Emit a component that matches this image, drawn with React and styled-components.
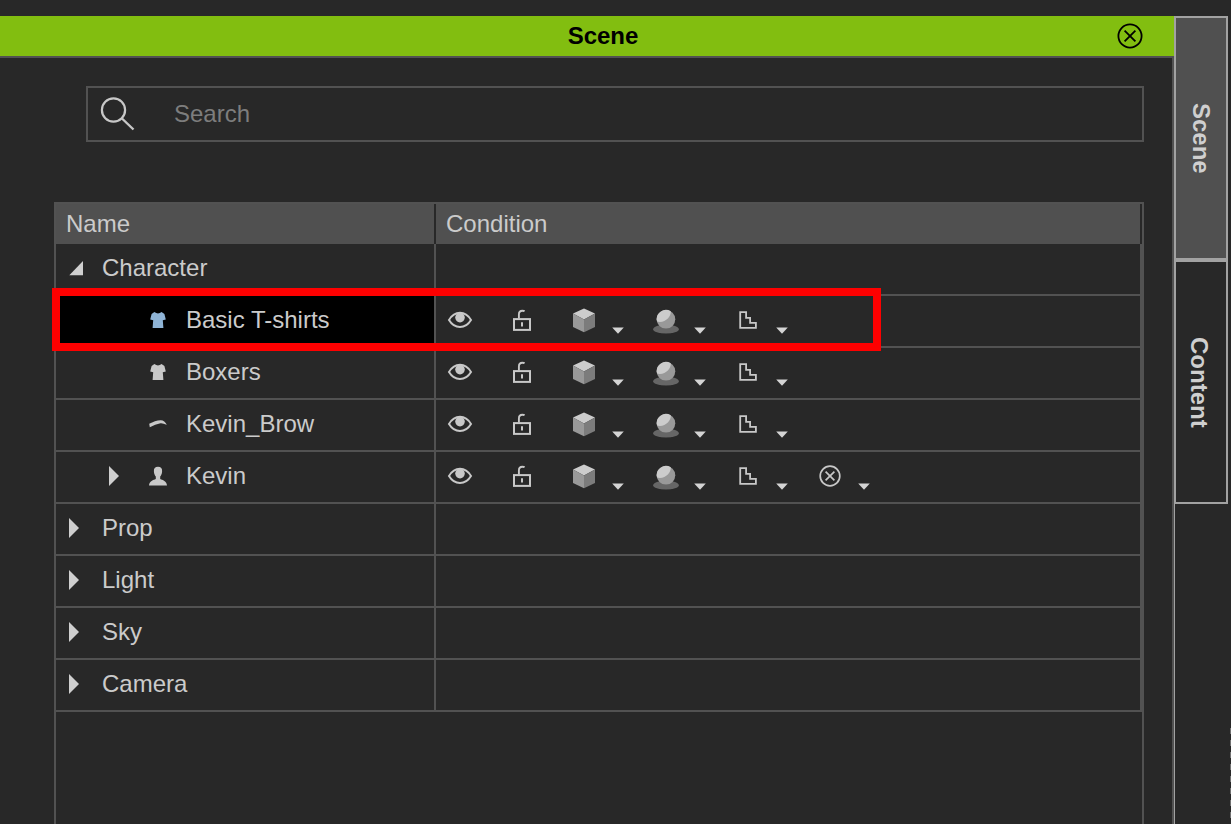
import React, { useState } from "react";
import styled, { createGlobalStyle, css } from "styled-components";

const color = {
  page: "#282828",
  line: "#525252",
  head: "#505050",
  text: "#cbcbcb",
  icon: "#c8c8c8",
  green: "#82be10",
  tabLine: "#a2a2a2",
};

const GlobalStyle = createGlobalStyle`
  * { box-sizing: border-box; }
  body {
    margin: 0;
    background: ${color.page};
    color: ${color.text};
    font-family: "Liberation Sans", Arial, sans-serif;
    font-size: 24px;
    line-height: 28px;
  }
`;

const Shell = styled.div`
  display: flex;
  min-height: 100vh;
  padding-top: 16px;
`;

const Panel = styled.main`
  flex: 1;
  min-width: 0;
  display: flex;
  flex-direction: column;
`;

const TitleBar = styled.header`
  display: grid;
  grid-template-columns: 1fr auto 1fr;
  align-items: center;
  height: 42px;
  padding: 0 30px 0 62px;
  background: ${color.green};
  border-bottom: 2px solid ${color.line};
  color: #000;
`;

const Title = styled.h1`
  grid-column: 2;
  margin: 0;
  font-size: 24px;
  font-weight: 700;
  line-height: 28px;
`;

const PlainButton = styled.button`
  display: block;
  flex: none;
  padding: 0;
  border: 0;
  background: none;
  color: inherit;
  cursor: pointer;

  svg {
    display: block;
  }
`;

const CloseButton = styled(PlainButton)`
  justify-self: end;
`;

const PanelBody = styled.div`
  flex: 1;
  display: flex;
  flex-direction: column;
  gap: 60px;
  padding: 28px 28px 0 54px;
  border-right: 2px solid ${color.line};
`;

const SearchBox = styled.label`
  display: flex;
  align-items: center;
  height: 56px;
  margin-left: 32px;
  padding-left: 10px;
  gap: 36px;
  border: 2px solid ${color.line};
`;

const SearchInput = styled.input`
  flex: 1;
  min-width: 0;
  padding: 0;
  border: 0;
  outline: 0;
  background: none;
  color: ${color.text};
  font: inherit;

  &::placeholder {
    color: #7d7d7d;
    opacity: 1;
  }
`;

const TreeFrame = styled.section`
  flex: 1;
  border: 2px solid ${color.line};
  border-bottom: 0;
`;

const TreeTable = styled.table`
  width: 100%;
  table-layout: fixed;
  border-collapse: separate;
  border-spacing: 0;
`;

const NameColumn = styled.col`
  width: 380px;
`;

const HeadCell = styled.th`
  height: 40px;
  padding: 0 10px;
  background: ${color.head};
  border-right: 2px solid ${color.page};
  font-weight: 400;
  text-align: left;
`;

const BodyCell = styled.td`
  height: 52px;
  padding: 0 0 2px;
  border-right: 2px solid ${color.line};
  border-bottom: 2px solid ${color.line};
  ${(p) => p.$marked && css`position: relative;`}
  ${(p) => p.$selected && css`background: #000;`}
`;

const NameContent = styled.div`
  display: flex;
  align-items: center;
  gap: 18px;
  padding-left: ${(p) => (p.$child ? 52 : 12)}px;
`;

const ArrowSlot = styled.span`
  flex: none;
  width: 16px;
`;

const TypeSlot = styled.span`
  flex: none;
  margin-left: 6px;
  color: ${(p) => (p.$selected ? "#8fb4d6" : color.icon)};

  svg {
    display: block;
  }
`;

const Highlight = styled.span`
  position: absolute;
  z-index: 1;
  top: -8px;
  left: -4px;
  width: 829px;
  height: 63px;
  border: 8px solid #fe0000;
  pointer-events: none;
`;

const Conditions = styled.div`
  display: flex;
  padding-left: 10px;
  color: ${color.icon};
`;

const Toggle = styled(PlainButton)`
  margin-right: 34px;
`;

const Choice = styled.div`
  display: flex;
  gap: 14px;
  margin-right: 28px;
`;

const TabRail = styled.nav`
  flex: none;
  display: flex;
  flex-direction: column;
  border-left: 1px solid ${color.tabLine};
`;

const Tab = styled.button`
  width: 53px;
  height: 244px;
  margin-right: 3px;
  padding: 0 ${(p) => (p.$active ? 1 : 4)}px 0 0;
  display: flex;
  align-items: center;
  justify-content: center;
  border: 2px solid ${color.tabLine};
  border-left-width: 1px;
  background: ${(p) => (p.$active ? color.head : color.page)};
  color: #cfcfcf;
  font: inherit;
  font-weight: 700;
  writing-mode: vertical-rl;
  cursor: pointer;
`;

const DashedEdge = styled.div`
  flex: 1;
  align-self: flex-end;
  width: 1px;
  margin-top: 224px;
  background: repeating-linear-gradient(#707070 0 6px, transparent 6px 12px);
`;

const CrossIcon = ({ r = 10, arm = 5, width = 2 }) => (
  <svg width="28" height="28" viewBox="0 0 28 28" fill="none" stroke="currentColor" strokeWidth={width}>
    <circle cx="14" cy="14" r={r} />
    <path d={`M${14 - arm} ${14 - arm}L${14 + arm} ${14 + arm}M${14 + arm} ${14 - arm}L${14 - arm} ${14 + arm}`} />
  </svg>
);

const SearchIcon = () => (
  <svg width="40" height="40" viewBox="0 0 40 40" fill="none" stroke={color.icon} strokeWidth="2.2">
    <circle cx="15.5" cy="16" r="11.6" />
    <path d="M24 24.5L35.5 35.5" strokeWidth="2.4" />
  </svg>
);

const EyeIcon = () => (
  <svg width="28" height="28" viewBox="0 0 28 28">
    <path d="M3 14C6 9 10 6.8 14 6.8S22 9 25 14C22 19 18 21 14 21S6 19 3 14Z" fill="none" stroke="currentColor" strokeWidth="2" />
    <circle cx="14" cy="11.6" r="4.8" fill="currentColor" />
  </svg>
);

const LockIcon = () => (
  <svg width="28" height="28" viewBox="0 0 28 28" fill="none" stroke="currentColor">
    <rect x="6" y="13.1" width="16" height="10.8" strokeWidth="2" />
    <path d="M10.9 12.5V8.5Q10.9 4.8 14.4 4.8Q16 4.8 16.6 5.2" strokeWidth="1.9" />
    <path d="M14 16.3V20.6" strokeWidth="2" />
  </svg>
);

const CubeIcon = () => (
  <svg width="28" height="28" viewBox="0 0 28 28">
    <path d="M14 2.6L25 7.4L14 13.5L3 7.4Z" fill="#cccccc" />
    <path d="M3 7.4L14 13.5V26.2L3 21Z" fill="#999999" />
    <path d="M25 7.4L14 13.5V26.2L25 21Z" fill="#7c7c7c" />
  </svg>
);

const SphereIcon = () => (
  <svg width="28" height="28" viewBox="0 0 28 28">
    <ellipse cx="14" cy="23.2" rx="12.8" ry="4.4" fill="#666666" />
    <circle cx="14" cy="13.3" r="9.3" fill="#999999" />
    <path d="M5 15.6A9.3 9.3 0 0 1 18.8 5.3C19.2 10.8 13 17.6 5 15.6Z" fill="#cccccc" />
  </svg>
);

const StepsIcon = () => (
  <svg width="28" height="28" viewBox="0 0 28 28" fill="none" stroke="currentColor" strokeWidth="1.8">
    <path d="M6.2 6.2H12.1V11.8H16.1V16.9H21.9V21.9H6.2Z" />
  </svg>
);

const CaretIcon = () => (
  <svg width="12" height="28" viewBox="0 0 12 28">
    <path d="M0.2 21.6H11.8L6 27.8Z" fill="#d4d4d4" />
  </svg>
);

const ArrowIcon = ({ open }) => (
  <svg width="16" height="24" viewBox="0 0 16 24" fill="#cfcfcf">
    <path d={open ? "M1.3 19.2H15V5Z" : "M1 2V22L11 12Z"} />
  </svg>
);

const typeShapes = {
  shirt: "M6.4 2.1Q10 4.8 13.6 2.1L16.4 4L17.8 9.4L14.8 10.2L15.4 18H4.6L5.2 10.2L2.2 9.4L3.6 4Z",
  brow: "M1.2 9.8C5 7.8 9 6.2 12.5 6.2C15 6 17.5 8 18.8 10.8C16 9.8 14.5 9 12.5 9.2C9 9.8 5.5 11.6 1.8 13.2Z",
  person:
    "M10 0.8C13 0.8 14.3 2.6 14.1 5.2C14 8 13 9.6 12.2 10.6V13C14.5 14.2 18.8 14.8 19 19.6H1C1.2 14.8 5.5 14.2 7.8 13V10.6C7 9.6 6 8 5.9 5.2C5.7 2.6 7 0.8 10 0.8Z",
};

const TypeIcon = ({ type }) => (
  <svg width="20" height="20" viewBox="0 0 20 20" fill="currentColor">
    <path d={typeShapes[type]} />
  </svg>
);

const choices = [
  { label: "Render style", icon: <CubeIcon /> },
  { label: "Shading", icon: <SphereIcon /> },
  { label: "Quality", icon: <StepsIcon /> },
  { label: "Freeze", icon: <CrossIcon r={9.8} arm={4.4} width={1.7} />, actorOnly: true },
];

const ConditionIcons = ({ actor }) => (
  <Conditions>
    <Toggle aria-label="Visible"><EyeIcon /></Toggle>
    <Toggle aria-label="Lock"><LockIcon /></Toggle>
    {choices
      .filter((c) => actor || !c.actorOnly)
      .map((c) => (
        <Choice key={c.label}>
          <PlainButton aria-label={c.label}>{c.icon}</PlainButton>
          <PlainButton aria-label={`${c.label} options`} aria-haspopup="menu"><CaretIcon /></PlainButton>
        </Choice>
      ))}
  </Conditions>
);

const rows = [
  { name: "Character", open: true },
  { name: "Basic T-shirts", type: "shirt", selected: true },
  { name: "Boxers", type: "shirt" },
  { name: "Kevin_Brow", type: "brow" },
  { name: "Kevin", type: "person", expandable: true },
  { name: "Prop" },
  { name: "Light" },
  { name: "Sky" },
  { name: "Camera" },
];

const TreeRow = ({ row }) => {
  const child = Boolean(row.type);
  return (
    <tr>
      <BodyCell $marked={row.selected} $selected={row.selected}>
        <NameContent $child={child}>
          <ArrowSlot>
            {(!child || row.expandable) && (
              <PlainButton aria-label={`Expand ${row.name}`} aria-expanded={Boolean(row.open)}>
                <ArrowIcon open={row.open} />
              </PlainButton>
            )}
          </ArrowSlot>
          {child && <TypeSlot $selected={row.selected}><TypeIcon type={row.type} /></TypeSlot>}
          <span>{row.name}</span>
        </NameContent>
        {row.selected && <Highlight />}
      </BodyCell>
      <BodyCell>{child && <ConditionIcons actor={row.type === "person"} />}</BodyCell>
    </tr>
  );
};

export default function App() {
  const [query, setQuery] = useState("");
  return (
    <>
      <GlobalStyle />
      <Shell>
        <Panel>
          <TitleBar>
            <Title>Scene</Title>
            <CloseButton aria-label="Close"><CrossIcon r={11.6} arm={5.4} width={1.8} /></CloseButton>
          </TitleBar>
          <PanelBody>
            <SearchBox>
              <SearchIcon />
              <SearchInput
                type="text"
                aria-label="Search"
                placeholder="Search"
                value={query}
                onChange={(e) => setQuery(e.target.value)}
              />
            </SearchBox>
            <TreeFrame>
              <TreeTable>
                <colgroup>
                  <NameColumn />
                  <col />
                </colgroup>
                <thead>
                  <tr>
                    <HeadCell scope="col">Name</HeadCell>
                    <HeadCell scope="col">Condition</HeadCell>
                  </tr>
                </thead>
                <tbody>
                  {rows.map((row) => (
                    <TreeRow key={row.name} row={row} />
                  ))}
                </tbody>
              </TreeTable>
            </TreeFrame>
          </PanelBody>
        </Panel>
        <TabRail>
          <Tab $active>Scene</Tab>
          <Tab>Content</Tab>
          <DashedEdge />
        </TabRail>
      </Shell>
    </>
  );
}
